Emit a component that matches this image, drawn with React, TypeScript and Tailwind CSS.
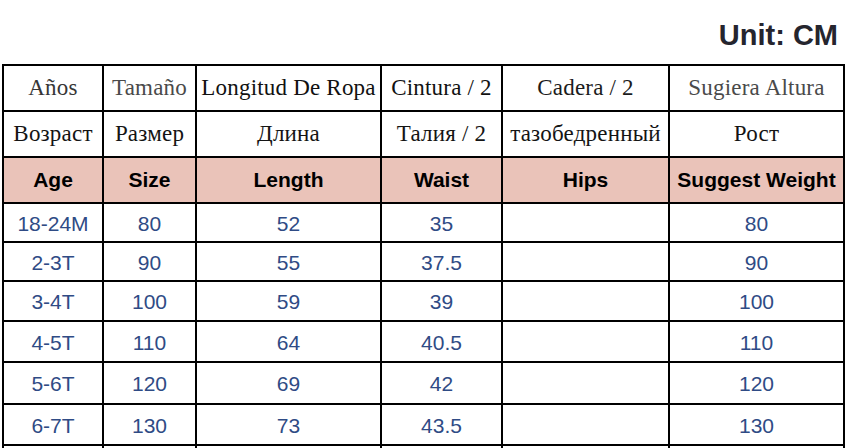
import React from 'react';

const serif = { fontFamily: '"Liberation Serif", "Times New Roman", serif' };

const spanish = [
  { t: 'Años', c: 'text-[#363636]' },
  { t: 'Tamaño', c: 'text-[#4a4a4a]' },
  { t: 'Longitud De Ropa', c: 'text-[#111111]' },
  { t: 'Cintura / 2', c: 'text-[#111111]' },
  { t: 'Cadera / 2', c: 'text-[#1c1c1c]' },
  { t: 'Sugiera Altura', c: 'text-[#4a4a4a]' },
];

const russian = ['Возраст', 'Размер', 'Длина', 'Талия / 2', 'тазобедренный', 'Рост'];

const english = ['Age', 'Size', 'Length', 'Waist', 'Hips', 'Suggest Weight'];

const rows = [
  ['18-24M', '80', '52', '35', '', '80'],
  ['2-3T', '90', '55', '37.5', '', '90'],
  ['3-4T', '100', '59', '39', '', '100'],
  ['4-5T', '110', '64', '40.5', '', '110'],
  ['5-6T', '120', '69', '42', '', '120'],
  ['6-7T', '130', '73', '43.5', '', '130'],
  // next row is cut off by the bottom edge, only its lines show
  ['', '', '', '', '', ''],
];

export default function App() {
  return (
    <div
      className="h-[448px] w-[848px] overflow-hidden bg-white"
      style={{ fontFamily: '"Liberation Sans", Arial, sans-serif' }}
    >
      {/* title */}
      <div className="flex justify-end pt-[21px] pb-[14px] pr-[10px]">
        <span className="text-[29px] leading-[29px] font-bold text-[#25252e]">Unit: CM</span>
      </div>

      {/* size chart */}
      <div className="ml-[2px] w-[843px] border-2 border-black bg-black">
        <div className="grid grid-cols-[98px_91px_183px_119px_165px_173px] grid-rows-[44px_44px_44px_37px_37px_38px_39px_40px_39px_40px] gap-[2px]">
          {spanish.map((s) => (
            <div
              key={s.t}
              className={`flex items-center justify-center bg-white text-[23px] tracking-[0.2px] whitespace-nowrap ${s.c}`}
              style={serif}
            >
              {s.t}
            </div>
          ))}
          {russian.map((r) => (
            <div
              key={r}
              className="flex items-center justify-center bg-white text-[23px] tracking-[0.2px] whitespace-nowrap text-[#141414]"
              style={serif}
            >
              {r}
            </div>
          ))}
          {english.map((e) => (
            <div
              key={e}
              className="flex items-center justify-center bg-[#eac3b9] text-[21px] font-bold text-black whitespace-nowrap"
            >
              {e}
            </div>
          ))}
          {rows.map((row, i) =>
            row.map((v, j) => (
              <div
                key={`${i}-${j}`}
                className="flex items-center justify-center bg-white pt-[2px] text-[21px] text-[#2f4b85]"
              >
                {v}
              </div>
            ))
          )}
        </div>
      </div>
    </div>
  );
}
